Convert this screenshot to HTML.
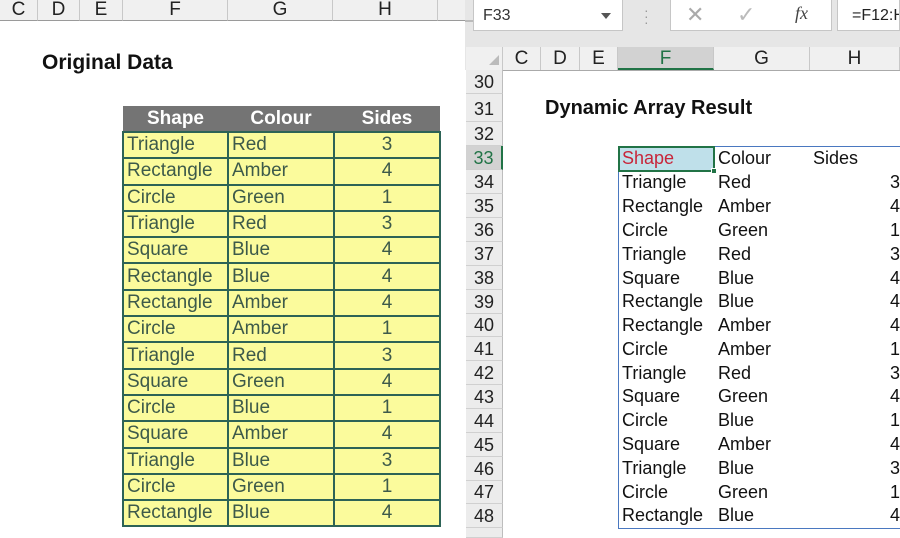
<!DOCTYPE html>
<html><head><style>
*{margin:0;padding:0;box-sizing:border-box}
body{width:900px;height:532px;overflow:hidden;background:#fff;font-family:"Liberation Sans",Arial,sans-serif;position:relative}
.a{position:absolute}
.ch{position:absolute;top:0;height:21px;background:#f0f0f0;border-right:1px solid #c8c8c8;border-bottom:1px solid #9a9a9a;font-size:19px;color:#222;text-align:center;line-height:19px}
.lt td{border:2px solid #2d6356;background:#fbfb9c;color:#3d5a4a;font-size:19px;height:26.3px;padding:0 3px;line-height:22px;white-space:nowrap}
.lt th{background:#747474;color:#fff;font-size:19px;height:26px;border:0;border-bottom:2px solid #2d6356}
.lt{border-collapse:collapse;position:absolute;left:122px;top:106px;width:317px;table-layout:fixed}
.rh{position:absolute;left:466px;width:37px;background:#ececec;border-bottom:1px solid #d0d0d0;border-right:1px solid #bdbdbd;font-size:18px;color:#222;text-align:center}
.rc{position:absolute;font-size:18px;color:#111;white-space:nowrap}
.hc{position:absolute;top:47px;height:23px;border-right:1px solid #c8c8c8;font-size:19px;text-align:center;line-height:24px;color:#222}
</style></head><body>
<div class="ch" style="left:0;width:38px">C</div>
<div class="ch" style="left:38px;width:42px">D</div>
<div class="ch" style="left:80px;width:43px">E</div>
<div class="ch" style="left:123px;width:105px">F</div>
<div class="ch" style="left:228px;width:105px">G</div>
<div class="ch" style="left:333px;width:105px">H</div>
<div class="ch" style="left:438px;width:28px"></div>
<div class="a" style="left:42px;top:51px;font-size:21px;font-weight:bold;color:#111">Original Data</div>
<table class="lt">
<colgroup><col style="width:105px"><col style="width:106px"><col style="width:106px"></colgroup>
<tr><th>Shape</th><th>Colour</th><th>Sides</th></tr>
<tr><td>Triangle</td><td>Red</td><td style="text-align:center">3</td></tr>
<tr><td>Rectangle</td><td>Amber</td><td style="text-align:center">4</td></tr>
<tr><td>Circle</td><td>Green</td><td style="text-align:center">1</td></tr>
<tr><td>Triangle</td><td>Red</td><td style="text-align:center">3</td></tr>
<tr><td>Square</td><td>Blue</td><td style="text-align:center">4</td></tr>
<tr><td>Rectangle</td><td>Blue</td><td style="text-align:center">4</td></tr>
<tr><td>Rectangle</td><td>Amber</td><td style="text-align:center">4</td></tr>
<tr><td>Circle</td><td>Amber</td><td style="text-align:center">1</td></tr>
<tr><td>Triangle</td><td>Red</td><td style="text-align:center">3</td></tr>
<tr><td>Square</td><td>Green</td><td style="text-align:center">4</td></tr>
<tr><td>Circle</td><td>Blue</td><td style="text-align:center">1</td></tr>
<tr><td>Square</td><td>Amber</td><td style="text-align:center">4</td></tr>
<tr><td>Triangle</td><td>Blue</td><td style="text-align:center">3</td></tr>
<tr><td>Circle</td><td>Green</td><td style="text-align:center">1</td></tr>
<tr><td>Rectangle</td><td>Blue</td><td style="text-align:center">4</td></tr>
</table>
<div class="a" style="left:465px;top:0;width:435px;height:70px;background:#e6e6e6"></div>
<div class="a" style="left:465px;top:20px;width:8px;height:2px;background:#bbb"></div>
<div class="a" style="left:473px;top:0;width:150px;height:31px;background:#fff;border:1px solid #c6c6c6;border-top:0;font-size:16px;line-height:31px;padding-left:9px;color:#333">F33</div>
<div class="a" style="left:601px;top:13px;width:0;height:0;border-left:5px solid transparent;border-right:5px solid transparent;border-top:6px solid #555"></div>
<div class="a" style="left:644px;top:7px;font-size:14px;color:#999;line-height:6px">·<br>·<br>·</div>
<div class="a" style="left:670px;top:0;width:162px;height:31px;background:#fff;border:1px solid #c6c6c6;border-top:0"></div>
<div class="a" style="left:686px;top:2px;font-size:22px;color:#aaa">✕</div>
<div class="a" style="left:737px;top:2px;font-size:22px;color:#bbb">✓</div>
<div class="a" style="left:795px;top:3px;font-size:18px;font-style:italic;font-family:'Liberation Serif',serif;color:#444">fx</div>
<div class="a" style="left:837px;top:0;width:63px;height:31px;background:#fff;border:1px solid #c6c6c6;border-top:0;font-size:16px;line-height:31px;padding-left:14px;color:#222;white-space:nowrap;overflow:hidden">=F12:H</div>
<div class="a" style="left:466px;top:47px;width:434px;height:24px;background:#f0f0f0;border-bottom:1px solid #aaa"></div>
<div class="a" style="left:489px;top:55px;width:0;height:0;border-left:10px solid transparent;border-bottom:10px solid #bbb"></div>
<div class="hc" style="left:466px;width:37px"></div>
<div class="hc" style="left:503px;width:38px">C</div>
<div class="hc" style="left:541px;width:39px">D</div>
<div class="hc" style="left:580px;width:38px">E</div>
<div class="hc" style="left:618px;width:96px;background:#d2d2d2;border-bottom:2px solid #217346;color:#217346">F</div>
<div class="hc" style="left:714px;width:96px">G</div>
<div class="hc" style="left:810px;width:90px">H</div>
<div class="rh" style="top:70px;height:24px;line-height:24px">30</div>
<div class="rh" style="top:94px;height:28px;line-height:30px">31</div>
<div class="rh" style="top:122px;height:24px;line-height:24px">32</div>
<div class="rh" style="top:146px;height:24px;line-height:24px;background:#d2d2d2;border-right:2px solid #217346;color:#217346">33</div>
<div class="rh" style="top:170px;height:24px;line-height:24px">34</div>
<div class="rh" style="top:194px;height:24px;line-height:24px">35</div>
<div class="rh" style="top:218px;height:24px;line-height:24px">36</div>
<div class="rh" style="top:242px;height:24px;line-height:24px">37</div>
<div class="rh" style="top:266px;height:24px;line-height:24px">38</div>
<div class="rh" style="top:290px;height:24px;line-height:24px">39</div>
<div class="rh" style="top:314px;height:23px;line-height:23px">40</div>
<div class="rh" style="top:337px;height:24px;line-height:24px">41</div>
<div class="rh" style="top:361px;height:24px;line-height:24px">42</div>
<div class="rh" style="top:385px;height:24px;line-height:24px">43</div>
<div class="rh" style="top:409px;height:24px;line-height:24px">44</div>
<div class="rh" style="top:433px;height:24px;line-height:24px">45</div>
<div class="rh" style="top:457px;height:24px;line-height:24px">46</div>
<div class="rh" style="top:481px;height:23px;line-height:23px">47</div>
<div class="rh" style="top:504px;height:24px;line-height:24px">48</div>
<div class="rh" style="top:528px;height:10px"></div>
<div class="a" style="left:545px;top:97px;font-size:20px;font-weight:bold;color:#111">Dynamic Array Result</div>
<div class="a" style="left:618px;top:146px;width:290px;height:383px;border:1px solid #4a78c0"></div>
<div class="a" style="left:618px;top:146px;width:97px;height:26px;background:#bfe0ea;border:2px solid #217346"></div>
<div class="a" style="left:711px;top:168px;width:6px;height:6px;background:#217346;border:1px solid #fff"></div>
<div class="rc" style="left:622px;top:148px;color:#c8253a">Shape</div>
<div class="rc" style="left:718px;top:148px">Colour</div>
<div class="rc" style="left:813px;top:148px">Sides</div>
<div class="rc" style="left:622px;top:172px">Triangle</div><div class="rc" style="left:718px;top:172px">Red</div><div class="rc" style="left:890px;top:172px">3</div>
<div class="rc" style="left:622px;top:196px">Rectangle</div><div class="rc" style="left:718px;top:196px">Amber</div><div class="rc" style="left:890px;top:196px">4</div>
<div class="rc" style="left:622px;top:220px">Circle</div><div class="rc" style="left:718px;top:220px">Green</div><div class="rc" style="left:890px;top:220px">1</div>
<div class="rc" style="left:622px;top:244px">Triangle</div><div class="rc" style="left:718px;top:244px">Red</div><div class="rc" style="left:890px;top:244px">3</div>
<div class="rc" style="left:622px;top:268px">Square</div><div class="rc" style="left:718px;top:268px">Blue</div><div class="rc" style="left:890px;top:268px">4</div>
<div class="rc" style="left:622px;top:291px">Rectangle</div><div class="rc" style="left:718px;top:291px">Blue</div><div class="rc" style="left:890px;top:291px">4</div>
<div class="rc" style="left:622px;top:315px">Rectangle</div><div class="rc" style="left:718px;top:315px">Amber</div><div class="rc" style="left:890px;top:315px">4</div>
<div class="rc" style="left:622px;top:339px">Circle</div><div class="rc" style="left:718px;top:339px">Amber</div><div class="rc" style="left:890px;top:339px">1</div>
<div class="rc" style="left:622px;top:363px">Triangle</div><div class="rc" style="left:718px;top:363px">Red</div><div class="rc" style="left:890px;top:363px">3</div>
<div class="rc" style="left:622px;top:386px">Square</div><div class="rc" style="left:718px;top:386px">Green</div><div class="rc" style="left:890px;top:386px">4</div>
<div class="rc" style="left:622px;top:410px">Circle</div><div class="rc" style="left:718px;top:410px">Blue</div><div class="rc" style="left:890px;top:410px">1</div>
<div class="rc" style="left:622px;top:434px">Square</div><div class="rc" style="left:718px;top:434px">Amber</div><div class="rc" style="left:890px;top:434px">4</div>
<div class="rc" style="left:622px;top:458px">Triangle</div><div class="rc" style="left:718px;top:458px">Blue</div><div class="rc" style="left:890px;top:458px">3</div>
<div class="rc" style="left:622px;top:482px">Circle</div><div class="rc" style="left:718px;top:482px">Green</div><div class="rc" style="left:890px;top:482px">1</div>
<div class="rc" style="left:622px;top:505px">Rectangle</div><div class="rc" style="left:718px;top:505px">Blue</div><div class="rc" style="left:890px;top:505px">4</div>
</body></html>
